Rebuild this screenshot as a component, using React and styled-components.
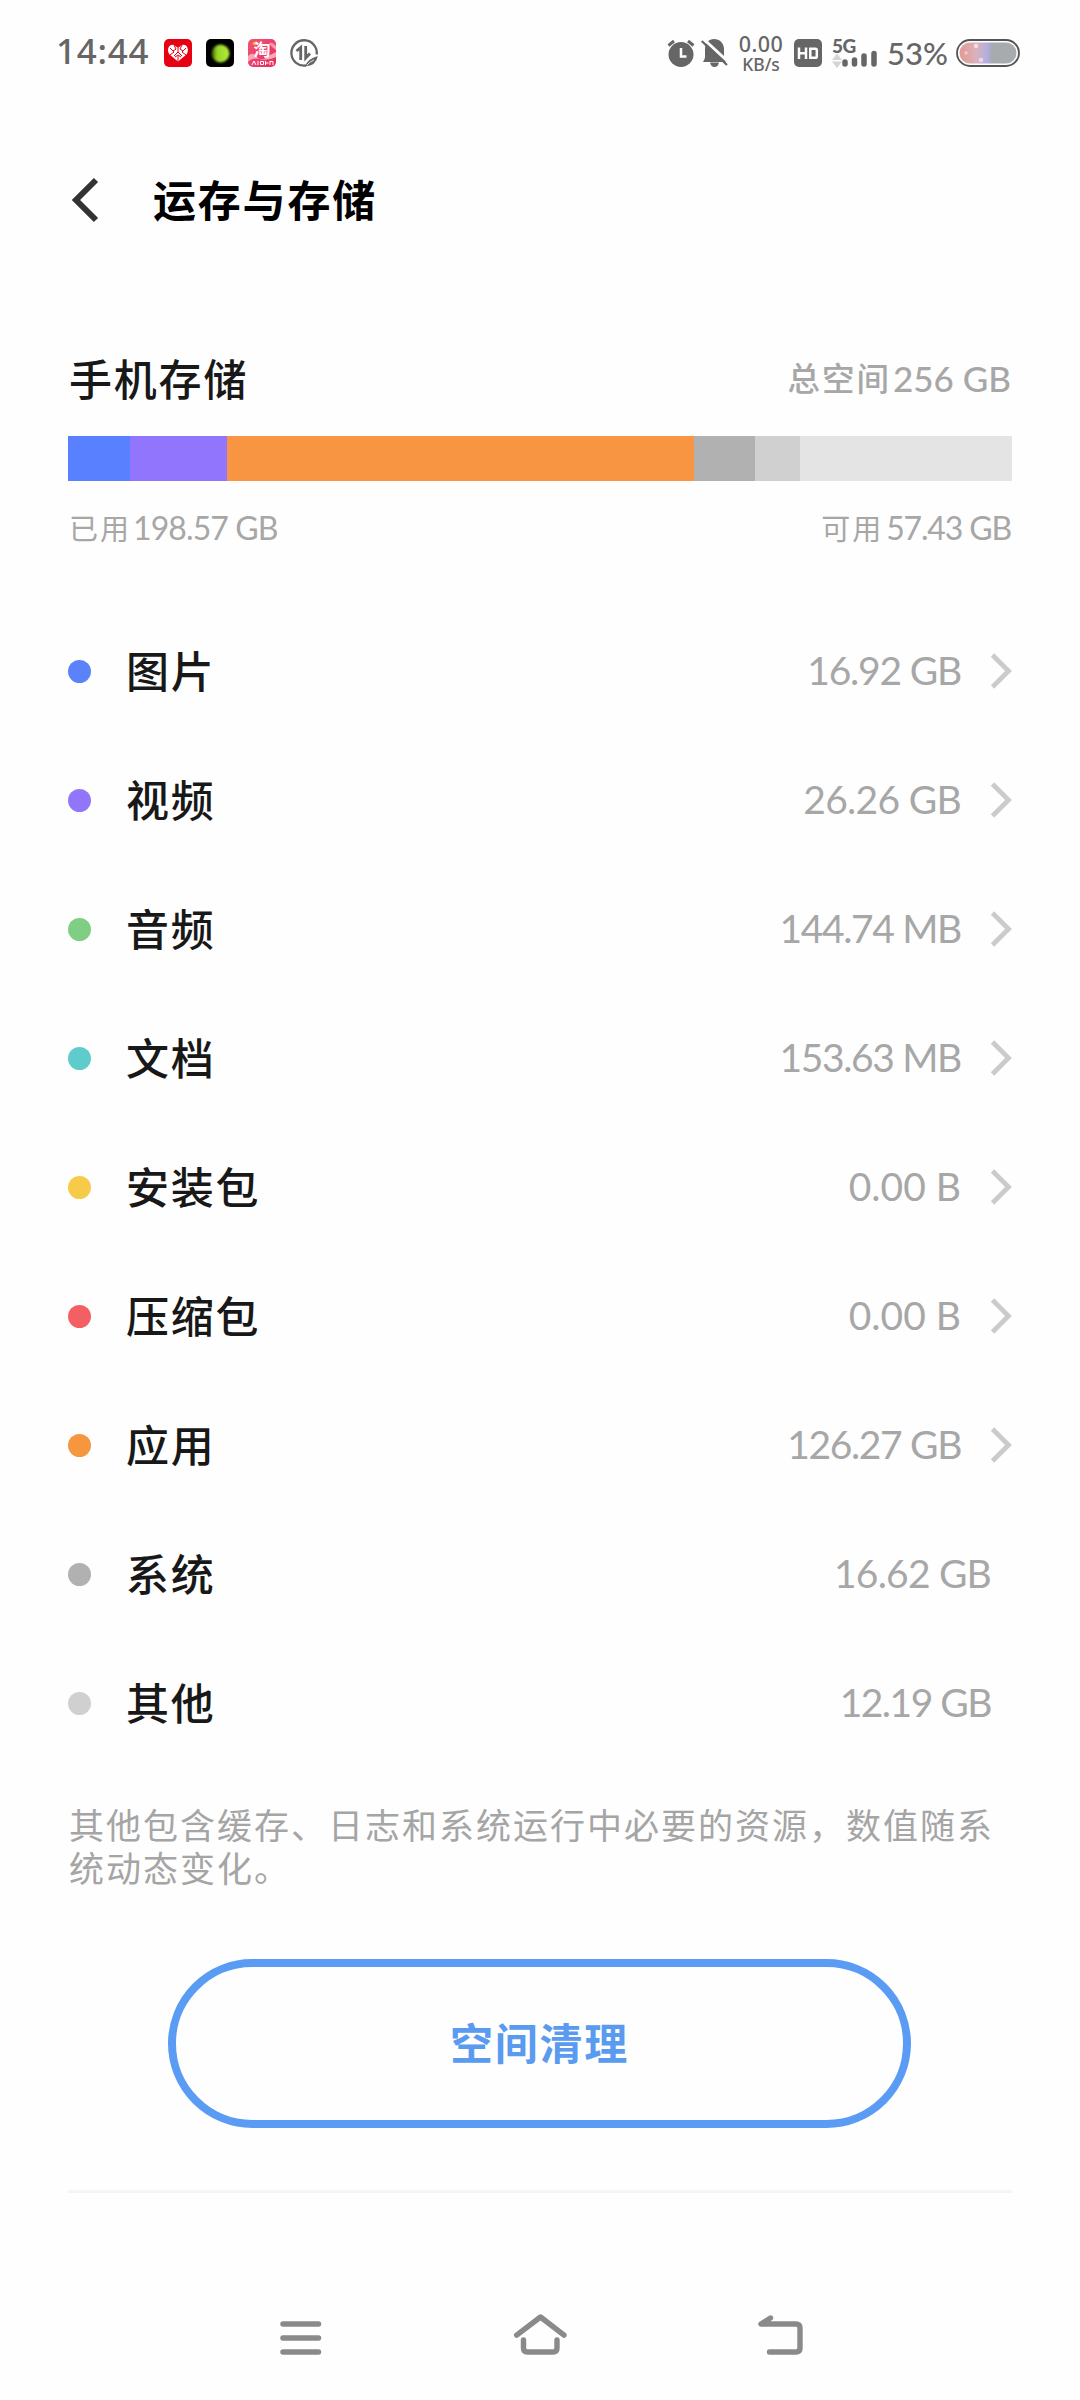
import React from "react";
import styled, { createGlobalStyle } from "styled-components";

const GlobalStyle = createGlobalStyle`
  * { box-sizing: border-box; }
  html, body { margin: 0; padding: 0; background: #fefefe; }
  body { font-family: Lato, "Noto Sans CJK SC", sans-serif; }
`;

const Screen = styled.div`
  width: 1080px;
  height: 2400px;
  display: flex;
  flex-direction: column;
  background: #fefefe;
  overflow: hidden;
`;

const StatusBar = styled.header`
  height: 106px;
  padding: 0 60px 0 56px;
  display: flex;
  align-items: center;
  justify-content: space-between;
  color: #666;
`;

const StatusGroup = styled.div`
  display: flex;
  align-items: center;
`;

const Clock = styled.span`
  width: 108px;
  margin-top: -5px;
  font-family: "Noto Sans", sans-serif;
  font-size: 35px;
  font-weight: 500;
  letter-spacing: 0.7px;
  line-height: 36px;
  white-space: nowrap;
`;

const BatteryLevel = styled.span`
  width: 69px;
  margin-left: 9px;
  font-size: 31px;
  font-weight: 500;
  line-height: 36px;
  white-space: nowrap;
`;

const AppIcons = styled.div`
  display: flex;
  gap: 14px;
`;

const NetSpeed = styled.div`
  width: 48px;
  margin: 0 9px 0 8px;
  display: flex;
  flex-direction: column;
  align-items: center;
  font-family: "Noto Sans", sans-serif;
  font-weight: 500;
  white-space: nowrap;
`;

const SpeedValue = styled.span`
  font-size: 21.5px;
  letter-spacing: 0.5px;
  line-height: 21px;
`;

const SpeedUnit = styled.span`
  font-size: 17.5px;
  line-height: 20px;
`;

const SignalColumn = styled.div`
  width: 46px;
  height: 32px;
  margin-left: 10px;
  display: grid;
`;

const NetworkType = styled.span`
  grid-area: 1 / 1;
  align-self: start;
  font-size: 19px;
  font-weight: 900;
  letter-spacing: -0.5px;
  line-height: 18px;
`;

const IconSvg = styled.svg`
  display: block;
  flex: none;
  grid-area: 1 / 1;
  margin-left: ${(p) => p.$left || 0}px;
  overflow: visible;
`;

const TaoTile = styled.div`
  width: 28px;
  height: 28px;
  display: grid;
  justify-items: center;
`;

const TaoGlyph = styled.span`
  grid-area: 1 / 1;
  z-index: 1;
  font-size: 17px;
  font-weight: 700;
  line-height: 22px;
  color: #fff;
`;

const TitleBar = styled.div`
  height: 188px;
  padding-left: 68px;
  display: flex;
  align-items: center;
`;

const Title = styled.h1`
  margin: 2px 0 0 50px;
  font-size: 43px;
  font-weight: 700;
  letter-spacing: 1.8px;
  line-height: 60px;
  color: #000;
`;

const Content = styled.main`
  padding: 0 68px;
  display: flex;
  flex-direction: column;
`;

const SummaryRow = styled.div`
  height: ${(p) => p.$height}px;
  margin: ${(p) => p.$top}px 0 ${(p) => p.$bottom || 0}px;
  display: flex;
  align-items: center;
  justify-content: space-between;
`;

const SummaryName = styled.h2`
  margin: 2px 0 0 1px;
  font-size: 43px;
  font-weight: 500;
  letter-spacing: 1.8px;
  line-height: 60px;
  color: #181818;
`;

const Amount = styled.span`
  display: flex;
  align-items: center;
  gap: ${(p) => p.$gap}px;
  padding: 0 1px;
  color: #a7a7a7;
  white-space: nowrap;
`;

const AmountLabel = styled.span`
  font-size: ${(p) => p.$size}px;
  font-weight: ${(p) => p.$weight || 400};
  letter-spacing: 2px;
  line-height: 40px;
`;

const AmountNumber = styled.span`
  margin-top: -2px;
  font-size: ${(p) => p.$size}px;
  font-weight: ${(p) => p.$weight || 400};
  letter-spacing: ${(p) => p.$spacing || 0}px;
  line-height: 40px;
`;

const UsageBar = styled.div`
  height: 45px;
  display: flex;
  background: #e4e4e4;
`;

const Segment = styled.div`
  flex: none;
  width: ${(p) => p.$width}px;
  background: ${(p) => p.$color};
`;

const List = styled.ul`
  list-style: none;
  margin: 58px 0 0;
  padding: 0;
`;

const Item = styled.li`
  height: 129px;
  display: flex;
  align-items: center;
`;

const Dot = styled.span`
  width: 23px;
  height: 23px;
  border-radius: 50%;
  background: ${(p) => p.$color};
`;

const ItemName = styled.span`
  margin-left: 35px;
  font-size: 43px;
  font-weight: 500;
  letter-spacing: 1.8px;
  line-height: 60px;
  color: #181818;
`;

const ItemValue = styled.span`
  margin: -3px ${(p) => (p.$linked ? 27 : 21)}px 0 auto;
  font-size: 39px;
  letter-spacing: ${(p) => p.$spacing}px;
  line-height: 50px;
  color: #a7a7a7;
  white-space: nowrap;
`;

const Note = styled.p`
  margin: 36px 0 0 1px;
  font-size: 35px;
  letter-spacing: 2px;
  line-height: 43px;
  color: #a5a5a5;
`;

const CleanButton = styled.button`
  width: 743px;
  height: 169px;
  margin: 69px 0 0 100px;
  padding: 0;
  border: 8px solid #5a9bf4;
  border-radius: 85px;
  background: transparent;
  color: #5a9bf0;
  font-family: inherit;
  font-size: 43px;
  font-weight: 700;
  letter-spacing: 1.8px;
  line-height: 60px;
`;

const Divider = styled.hr`
  width: 944px;
  height: 3px;
  margin: 62px 0 0;
  border: 0;
  background: #f5f5f5;
`;

const NavBar = styled.nav`
  margin-top: auto;
  height: 131px;
  padding: 0 277px 0 280px;
  display: flex;
  align-items: center;
  justify-content: space-between;
`;

const SEGMENTS = [
  ["#5981ff", 62],
  ["#9175fc", 97],
  ["#f79542", 467],
  ["#b1b1b1", 61],
  ["#d0d0d0", 45],
];

const ITEMS = [
  ["图片", "16.92 GB", "#5b82fb", true, -1.2],
  ["视频", "26.26 GB", "#9176fb", true, -0.7],
  ["音频", "144.74 MB", "#7fce84", true, -1.35],
  ["文档", "153.63 MB", "#5fcbcd", true, -1.35],
  ["安装包", "0.00 B", "#f6cb4a", true, 0],
  ["压缩包", "0.00 B", "#f35f62", true, 0],
  ["应用", "126.27 GB", "#f6963f", true, -1.35],
  ["系统", "16.62 GB", "#b1b1b1", false, -0.8],
  ["其他", "12.19 GB", "#d0d0d0", false, -1.5],
];

const HeartAppIcon = () => (
  <IconSvg width="28" height="28" viewBox="0 0 28 28">
    <rect width="28" height="28" rx="5" fill="#e60012" />
    <path d="M14 22.500 5.500 15.500C2 10 5.500 4.500 10 6L14 9 18 6C22.500 4.500 26 10 22.500 15.500Z" fill="#fff" />
    <path d="M6 9l4 4-4 3M10 6l2 4-3 2M14 9v4l-4 4M18 6l-2 4 3 2M22 9l-4 4 4 3M14 13l4 4M11 18l3-2 3 2M14 17v5" fill="none" stroke="#e60012" strokeWidth="1" />
  </IconSvg>
);

const GlowAppIcon = () => (
  <IconSvg width="28" height="28" viewBox="0 0 28 28">
    <defs>
      <linearGradient id="glow" x1="0" x2="1">
        <stop offset="0" stopColor="#324d08" />
        <stop offset="0.3" stopColor="#95d526" />
        <stop offset="1" stopColor="#b4ec3c" />
      </linearGradient>
      <filter id="soft" x="-30%" y="-30%" width="160%" height="160%">
        <feGaussianBlur stdDeviation="0.8" />
      </filter>
    </defs>
    <rect width="28" height="28" rx="5" fill="#000" />
    <circle cx="14.500" cy="14.500" r="9" fill="url(#glow)" filter="url(#soft)" />
  </IconSvg>
);

const TaoAppIcon = () => (
  <TaoTile>
    <IconSvg width="28" height="28" viewBox="0 0 28 28">
      <defs>
        <linearGradient id="tao" x1="0" y1="0" x2="1" y2="1">
          <stop offset="0" stopColor="#f2556a" />
          <stop offset="0.5" stopColor="#ee3f70" />
          <stop offset="1" stopColor="#e42f55" />
        </linearGradient>
      </defs>
      <rect width="28" height="28" rx="5" fill="url(#tao)" />
      <path d="M0 17Q5 12 9 18T20 17L28 13V18Q20 22 12 20T0 23Z" fill="#f9a5ba" />
      <path d="M21 4Q25 3 28 7V11Q24 9 21 4Z" fill="#f99ab0" />
      <circle cx="6.500" cy="4.500" r="1.800" fill="#ffb02e" />
      <path d="M4 26l2-4 2 4M10 22v4M12.500 22.500h3v3h-3zM17.500 22v4M17.500 24h3M22 22.500h3v3.500M22 22v4" fill="none" stroke="#fff" strokeWidth="1" />
    </IconSvg>
    <TaoGlyph>淘</TaoGlyph>
  </TaoTile>
);

const TransferIcon = () => (
  <IconSvg width="28" height="28" viewBox="0 0 28 28" fill="none" stroke="#666">
    <path d="M26.700 15.500A12.700 12.700 0 1 0 16 26.500" strokeWidth="2.300" />
    <path d="M6.500 12 10.700 8.500V21" strokeWidth="2.800" />
    <path d="M15.700 7V19L20 14.500" strokeWidth="2.800" />
    <path d="M15.500 27.300Q16 20.500 27.800 17Q26 27 15.500 27.300Z" fill="#666" stroke="none" />
    <path d="M17 26Q20 22.500 24 21" stroke="#fefefe" strokeWidth="0.800" />
  </IconSvg>
);

const AlarmIcon = () => (
  <IconSvg width="28" height="28" viewBox="0 0 28 28">
    <circle cx="14" cy="15.500" r="12.500" fill="#666" />
    <path d="M1.500 6.500 7 2M26.500 6.500 21 2" stroke="#666" strokeWidth="3" />
    <path d="M14 9v8.500h5.500" fill="none" stroke="#fefefe" strokeWidth="2.500" />
  </IconSvg>
);

const MutedBellIcon = () => (
  <IconSvg $left={6} width="28" height="28" viewBox="0 0 28 28">
    <path d="M13 0C18.500 0 23 4 23 10V18Q23 20 25 23H2Q4 20 4 18V10C4 4 8 0 13 0Z" fill="#666" />
    <path d="M9 23.500H18Q17 28 13.500 28T9 23.500Z" fill="#666" />
    <path d="M2.500 0 28 23.500" stroke="#fefefe" strokeWidth="3" />
    <path d="M0.700 2 26 26" stroke="#666" strokeWidth="2.300" />
  </IconSvg>
);

const HdIcon = () => (
  <IconSvg width="28" height="28" viewBox="0 0 28 28">
    <rect width="28" height="28" rx="5" fill="#666" />
    <path d="M5 8.500V20M12 8.500V20M5 14.200H12M16.300 9.700H21.500Q22.800 9.700 22.800 11V17.500Q22.800 18.800 21.500 18.800H16.300Z" fill="none" stroke="#fefefe" strokeWidth="2.500" />
  </IconSvg>
);

const SignalBars = () => (
  <IconSvg width="46" height="32" viewBox="0 0 46 32">
    <path d="M0 23 5 16.500 10 23ZM0 24.500 5 31 10 24.500Z" fill="#d4d4d4" />
    <path d="M13 25V27M22.500 23V27M32 19V27M42 16.500V27" stroke="#666" strokeWidth="5.500" strokeLinecap="round" />
  </IconSvg>
);

const BatteryIcon = () => (
  <IconSvg width="64" height="28" viewBox="0 0 64 28">
    <defs>
      <linearGradient id="charge" x1="0" x2="1">
        <stop offset="0" stopColor="#e39a94" />
        <stop offset="0.300" stopColor="#d8b2be" />
        <stop offset="0.490" stopColor="#b4aee0" />
        <stop offset="0.540" stopColor="#a8abc4" />
        <stop offset="0.570" stopColor="#a7abae" />
        <stop offset="1" stopColor="#a9abad" />
      </linearGradient>
    </defs>
    <rect x="1" y="1" width="62" height="26" rx="13" fill="#fefefe" stroke="#555" strokeWidth="1.800" />
    <rect x="3.500" y="3.500" width="57" height="21" rx="10.500" fill="url(#charge)" />
    <circle cx="20" cy="7" r="2.200" fill="#f5dce2" />
    <circle cx="10" cy="14" r="1.800" fill="#f3c5c0" />
    <circle cx="25" cy="21" r="2.200" fill="#e9d9f0" />
  </IconSvg>
);

const BackIcon = () => (
  <IconSvg width="35" height="48" viewBox="0 0 35 48">
    <path d="M28 4 8 24 28 44" fill="none" stroke="#333" strokeWidth="6" />
  </IconSvg>
);

const ChevronIcon = () => (
  <IconSvg width="24" height="36" viewBox="0 0 24 36">
    <path d="M4.500 1 20.500 17 4.500 33" fill="none" stroke="#cbcbcb" strokeWidth="4.800" />
  </IconSvg>
);

const MenuIcon = () => (
  <IconSvg width="42" height="44" viewBox="0 0 42 44">
    <path d="M3 11H38.500M3 25H38.500M3 39H38.500" stroke="#8a8a8a" strokeWidth="5.500" strokeLinecap="round" />
  </IconSvg>
);

const HomeIcon = () => (
  <IconSvg width="54" height="44" viewBox="0 0 54 44" fill="none" stroke="#8a8a8a" strokeWidth="5.400" strokeLinecap="round" strokeLinejoin="round">
    <path d="M3.700 22.200 27.500 4 51 22.200" />
    <path d="M10.500 27V35Q10.500 39 14.500 39H40Q44 39 44 35V27" />
  </IconSvg>
);

const ReturnIcon = () => (
  <IconSvg width="45" height="44" viewBox="0 0 45 44" fill="none" stroke="#8a8a8a" strokeWidth="5.400" strokeLinecap="round" strokeLinejoin="round">
    <path d="M12.500 5 3 11H38Q42 11 42 15V35Q42 39 38 39H11.500" />
  </IconSvg>
);

export default function App() {
  return (
    <Screen>
      <GlobalStyle />
      <StatusBar>
        <StatusGroup>
          <Clock>14:44</Clock>
          <AppIcons>
            <HeartAppIcon />
            <GlowAppIcon />
            <TaoAppIcon />
            <TransferIcon />
          </AppIcons>
        </StatusGroup>
        <StatusGroup>
          <AlarmIcon />
          <MutedBellIcon />
          <NetSpeed>
            <SpeedValue>0.00</SpeedValue>
            <SpeedUnit>KB/s</SpeedUnit>
          </NetSpeed>
          <HdIcon />
          <SignalColumn>
            <NetworkType>5G</NetworkType>
            <SignalBars />
          </SignalColumn>
          <BatteryLevel>53%</BatteryLevel>
          <BatteryIcon />
        </StatusGroup>
      </StatusBar>
      <TitleBar>
        <BackIcon />
        <Title>运存与存储</Title>
      </TitleBar>
      <Content>
        <SummaryRow $height={60} $top={55} $bottom={27}>
          <SummaryName>手机存储</SummaryName>
          <Amount $gap={2}>
            <AmountLabel $size={32.5} $weight={500}>总空间</AmountLabel>
            <AmountNumber $size={35} $weight={500}>256 GB</AmountNumber>
          </Amount>
        </SummaryRow>
        <UsageBar>
          {SEGMENTS.map(([color, width]) => (
            <Segment key={color} $color={color} $width={width} />
          ))}
        </UsageBar>
        <SummaryRow $height={40} $top={28}>
          <Amount $gap={2}>
            <AmountLabel $size={29}>已用</AmountLabel>
            <AmountNumber $size={32} $spacing={-0.9}>198.57 GB</AmountNumber>
          </Amount>
          <Amount $gap={3}>
            <AmountLabel $size={29}>可用</AmountLabel>
            <AmountNumber $size={32} $spacing={-1.15}>57.43 GB</AmountNumber>
          </Amount>
        </SummaryRow>
        <List>
          {ITEMS.map(([name, value, color, linked, spacing]) => (
            <Item key={name}>
              <Dot $color={color} />
              <ItemName>{name}</ItemName>
              <ItemValue $linked={linked} $spacing={spacing}>{value}</ItemValue>
              {linked && <ChevronIcon />}
            </Item>
          ))}
        </List>
        <Note>其他包含缓存、日志和系统运行中必要的资源，数值随系统动态变化。</Note>
        <CleanButton type="button">空间清理</CleanButton>
        <Divider />
      </Content>
      <NavBar>
        <MenuIcon />
        <HomeIcon />
        <ReturnIcon />
      </NavBar>
    </Screen>
  );
}
